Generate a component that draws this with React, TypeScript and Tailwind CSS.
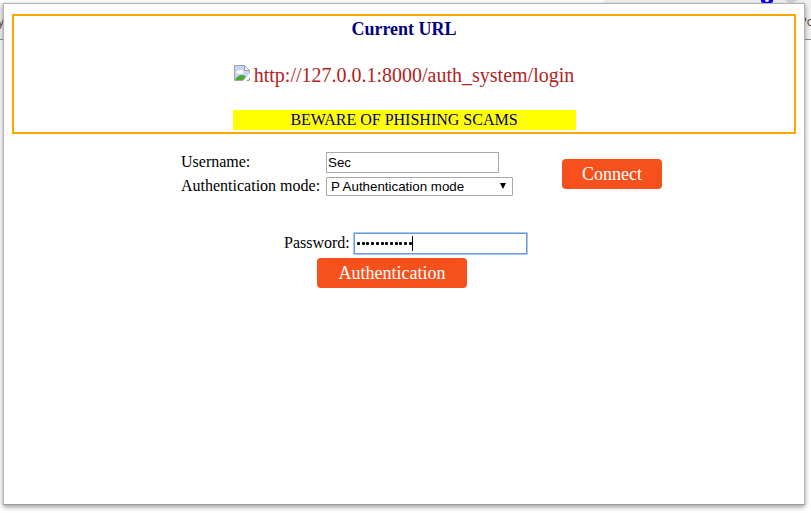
import React from 'react';

function BrowserChrome() {
  return (
    <div className="h-[513px] w-[811px] bg-white">
      <div className="flex h-[3px] overflow-hidden bg-[#f1f1f1]">
        <div className="h-[3px] w-[604px] rounded-br-[10px] bg-white" />
        <div className="ml-[157px] flex h-[3px] w-3 justify-center rounded-b-[2px] bg-[#0000ff]">
          <div className="h-[2px] w-1 rounded-b-sm bg-white" />
        </div>
        <div className="-mt-[15px] ml-[9px] h-[18px] w-[18px] shrink-0 rounded-full bg-[#d2d2d2]" />
      </div>
      <div className="flex h-[37px] justify-between overflow-hidden border-b border-[#8e8e8e] bg-[#f1f1f1] pt-[11px] font-['Open_Sans',sans-serif] text-[12px] leading-4 text-[#5a3636]">
        <span className="-ml-[2px]">y</span>
        <span className="-mr-[3px]">Po</span>
      </div>
    </div>
  );
}

function BrokenImage() {
  return (
    <svg width="16" height="16" viewBox="0 0 16 16" className="mr-1 mt-px shrink-0 self-start" aria-hidden="true">
      <path d="M.5.5h10l5 5v10H.5z" fill="#c5d7f5" />
      <path d="M2.500 7.500c0-2 2-2.500 3-1.500 1-2 4-1 3.500 1 1 0 1 1.500 0 1.500h-6z" fill="#fff" />
      <path d="M1 15c1-3 4-5 7-5 2 0 3 .7 4 1.500L9.500 15z" fill="#50a735" />
      <path d="M10.500.5H.5v15h8.500M15.500 8V5.500M15.500 12v3.500H12" fill="none" stroke="#a3a3a3" />
      <path d="M10.500.5v5h5z" fill="#fff" stroke="#a3a3a3" />
      <path d="M9 16 16 8v4l-4 4z" fill="#fff" />
    </svg>
  );
}

export default function App() {
  return (
    <div className="relative h-[513px] w-[811px] overflow-hidden font-['Liberation_Serif',serif] text-black">
      <BrowserChrome />
      <main className="absolute left-[3px] top-[3px] h-[502px] w-[802px] border border-[#b3b3b3] border-b-[#9e9e9e] bg-white px-2 pt-[10px] shadow-[0_2px_5px_rgba(0,0,0,0.4)]">
        <section className="flex h-[120px] flex-col items-center border-2 border-[#ffa500]">
          <h1 className="mt-[3px] text-[18px] font-bold leading-[21px] text-[#000080]">Current URL</h1>
          <div className="mt-6 flex h-[23px] text-[20px] leading-[23px] text-[#b22222]">
            <BrokenImage />
            <span>http://127.0.0.1:8000/auth_system/login</span>
          </div>
          <p className="mt-[23px] h-5 w-[343px] bg-[#ffff00] text-center text-[16px] leading-5 text-[#000080]">
            BEWARE OF PHISHING SCAMS
          </p>
        </section>

        <section className="mt-[18px] flex pl-[169px]">
          <div className="grid grid-cols-[145px_187px] gap-y-1 text-[16px]">
            <label className="h-[21px] leading-[19px]">Username:</label>
            <div className="flex h-[21px] w-[173px] items-center border border-[#a9a9a9] pl-px font-['Liberation_Sans',sans-serif] text-[13.33px]">
              Sec
            </div>
            <label className="h-[19px] leading-[17px]">Authentication mode:</label>
            <div className="flex h-[19px] items-center justify-between rounded-[1px] border border-[#a9a9a9] pl-1 pr-[6px] font-['Liberation_Sans',sans-serif] text-[13.33px]">
              <span>P Authentication mode</span>
              <svg width="6" height="6" viewBox="0 0 6 6" className="-mt-[2px]"><path d="M0 0h6L3 6z" /></svg>
            </div>
          </div>
          <button className="ml-[49px] mt-[7px] h-[30px] w-[100px] rounded-[4px] bg-[#f6511d] text-[18px] leading-[30px] text-white">
            Connect
          </button>
        </section>

        <section className="mt-[36px] flex flex-col">
          <div className="flex h-[23px] pl-[272px]">
            <label className="w-[69px] text-[16px] leading-[22px]">Password:</label>
            <div className="flex h-[23px] w-[175px] items-center rounded-[1px] border-2 border-[#a5c7f7] bg-white pl-[2px] outline outline-1 -outline-offset-2 outline-[#6f9bdc]">
              <div className="flex w-[55px] justify-between">
                {Array.from({ length: 12 }, (_, i) => (
                  <i key={i} className="h-[3px] w-[3px] rounded-[1px] bg-black" />
                ))}
              </div>
              <span className="h-[15px] w-px bg-black" />
            </div>
          </div>
          <button className="ml-[305px] mt-[3px] h-[30px] w-[150px] rounded-[4px] bg-[#f6511d] text-[18px] leading-[30px] text-white">
            Authentication
          </button>
        </section>
      </main>
    </div>
  );
}
